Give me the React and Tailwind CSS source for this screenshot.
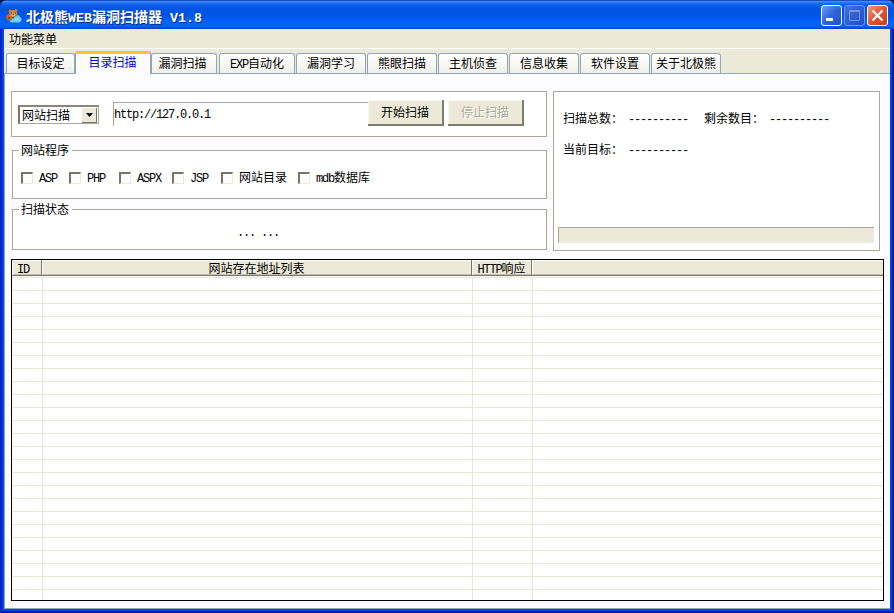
const tabs = [
  { label: '目标设定', className: 'ml-px w-[69px]' },
  { label: '目录扫描', active: true, className: 'w-[76px]' },
  { label: '漏洞扫描', className: 'w-[66px] pr-[3px]' },
  { label: 'EXP自动化', className: 'ml-[2px] w-[76px]' },
  { label: '漏洞学习', className: 'ml-px w-[70px]' },
  { label: '熊眼扫描', className: 'ml-px w-[70px]' },
  { label: '主机侦查', className: 'ml-px w-[70px]' },
  { label: '信息收集', className: 'ml-px w-[70px]' },
  { label: '软件设置', className: 'ml-px w-[70px]' },
  { label: '关于北极熊', className: 'ml-px w-[70px]' },
]

const programs = [
  { label: 'ASP', className: 'w-[48px]' },
  { label: 'PHP', className: 'w-[50px]' },
  { label: 'ASPX', className: 'w-[53px]' },
  { label: 'JSP', className: 'w-[49px]' },
  { label: '网站目录', className: 'w-[77px]' },
  { label: 'mdb数据库', className: 'w-[80px]' },
]

const columns = [
  { label: 'ID', width: 'w-[30px]', align: 'pl-[5px]' },
  { label: '网站存在地址列表', width: 'w-[430px]', align: 'justify-center' },
  { label: 'HTTP响应', width: 'w-[60px]', align: 'justify-center' },
  { label: '', width: 'flex-1', align: '' },
]

const rows = Array.from({ length: 25 }, (_, i) => i)

// Half-width characters take exactly half the width of a Chinese one
function Text({ children, title = false }) {
  const latin = title ? 'text-[13.33px]' : 'align-[0.5px] text-[12px] tracking-[-1.2px]'
  return (
    <span className="whitespace-pre">
      {children.split(/([\x20-\x7e]+)/).filter(Boolean).map((part, i) => (
        <span key={i} className={/^[\x20-\x7e]/.test(part) ? `font-['Liberation_Mono',monospace] leading-none ${latin}` : ''}>
          {part}
        </span>
      ))}
    </span>
  )
}

function BearIcon() {
  return (
    <svg width="16" height="16" viewBox="0 0 16 16" className="shrink-0">
      <path d="M4 13c0-2 2-3.500 4-2.500C8 7.500 13 6 14 9c2 1 2.300 4-.5 5.500H6c-1.500 0-2-.5-2-1.500z" fill="#6dc8f0" />
      <path d="M8 12.500c1-2 4-2 5 0" stroke="#b8ebff" fill="none" />
      <path d="M0 8l2.500-2 3 2 1 3-3 2-3-1.500z" fill="#b96a20" />
      <circle cx="4" cy="2.800" r="1.500" fill="#c47527" />
      <circle cx="10" cy="2.600" r="1.500" fill="#c47527" />
      <ellipse cx="7.200" cy="5.500" rx="4" ry="3.500" fill="#d6882f" />
      <ellipse cx="7.200" cy="7" rx="1.800" ry="1.300" fill="#eeb35c" />
      <path d="M5 5h1M9 5h1M6.700 6.500h1M2 10h2" stroke="#5b2b0b" />
    </svg>
  )
}

function CaptionButton({ kind }) {
  const colors = {
    min: 'border-white bg-linear-to-br from-[#6f9bf4] via-[#2f65dc] to-[#1c4fcb]',
    max: 'border-[#6f97ec] bg-linear-to-br from-[#3f70df] to-[#1c4fcb]',
    close: 'border-white bg-linear-to-br from-[#f0977c] via-[#e2532c] to-[#c93c14]',
  }
  return (
    <button className={`h-[21px] w-[21px] rounded-[3px] border ${colors[kind]}`}>
      <svg width="19" height="19" viewBox="0 0 19 19">
        {kind === 'min' && <path d="M4 12h7v3H4z" fill="#fff" />}
        {kind === 'max' && <path d="M4.500 4.500h10v10h-10zM4 5.500h11" fill="none" stroke="#7d93e0" />}
        {kind === 'close' && <path d="M4.500 4.500l10 10M14.500 4.500l-10 10" stroke="#fff" strokeWidth="2.200" />}
      </svg>
    </button>
  )
}

function TitleBar() {
  return (
    <header className="flex h-[29px] shrink-0 items-center bg-[linear-gradient(#0831a0_0%,#3b8cff_5%,#1262ec_14%,#0054e3_30%,#0055e7_55%,#0064fc_78%,#0062f8_90%,#0040c8_100%)] pt-[2px] pr-[6px] pl-[6px]">
      <BearIcon />
      <h1 className="ml-[4px] text-[14px] leading-[20px] font-bold text-white [text-shadow:1px_1px_#0a2a80]">
        <Text title>北极熊WEB漏洞扫描器 V1.8</Text>
      </h1>
      <div className="ml-auto flex gap-[2px]">
        <CaptionButton kind="min" />
        <CaptionButton kind="max" />
        <CaptionButton kind="close" />
      </div>
    </header>
  )
}

function Tab({ label, active, className }) {
  if (active) {
    return (
      <div className={`-mb-px flex h-[23px] items-start justify-center rounded-t-[2px] border-x border-t-3 border-x-[#91a7b4] border-t-[#ffc13c] bg-[#fcfcfe] pr-px text-[#0000e0] ${className}`}>
        <Text>{label}</Text>
      </div>
    )
  }
  return (
    <div className={`flex h-[20px] items-center justify-center rounded-t-[3px] border border-b-0 border-[#91a7b4] bg-linear-to-b from-white to-[#f0f0ea] pb-[2px] ${className}`}>
      <Text>{label}</Text>
    </div>
  )
}

function Group({ title, className = '', children }) {
  return (
    <section className={`border border-[#aca899] bg-white ${className}`}>
      {title && (
        <h2 className="-mt-[9px] ml-[6px] flex h-[17px] w-[53px] items-center bg-linear-to-b from-[#fcfcfe] from-50% to-white to-50% pb-[2px] pl-[2px]">
          <Text>{title}</Text>
        </h2>
      )}
      {children}
    </section>
  )
}

function PushButton({ label, disabled = false }) {
  return (
    <button
      disabled={disabled}
      className={`h-[26px] w-[76px] border-r-2 border-b-2 border-[#807d70] bg-[#ece9d8] pb-[1px] leading-[20px] shadow-[inset_1px_1px_#f8f7f0] ${disabled ? 'text-[#aca899] [text-shadow:1px_1px_#fff]' : ''}`}
    >
      <Text>{label}</Text>
    </button>
  )
}

function ScanTarget() {
  return (
    <Group className="flex h-[46px] w-[536px] pl-[6px]">
      <div className="mt-[13px] flex h-[19px] w-[81px] items-center border-t-2 border-l-2 border-r border-b border-t-[#8a877a] border-r-[#aca899] border-b-[#aca899] border-l-[#77746a] pl-[2px]">
        <Text>网站扫描</Text>
        <div className="mr-px ml-auto flex h-[15px] w-[15px] items-center justify-center border-r border-b border-[#77746a] bg-[#ece9d8]">
          <svg width="7" height="4" viewBox="0 0 7 4">
            <path d="M0 0h7L3.500 4z" />
          </svg>
        </div>
      </div>
      <div className="mt-[10px] ml-[14px] flex h-[24px] w-[255px] items-center border-t border-l border-[#aca899] pb-[3px]">
        <Text>http://127.0.0.1</Text>
      </div>
      <div className="mt-[8px] flex gap-[4px]">
        <PushButton label="开始扫描" />
        <PushButton label="停止扫描" disabled />
      </div>
    </Group>
  )
}

function Stat({ label, className = '' }) {
  return (
    <div className={`flex h-[18px] items-center ${className}`}>
      <span className="w-[65px]">
        <Text>{label}</Text>
      </span>
      <Text>----------</Text>
    </div>
  )
}

function ResultTable() {
  return (
    <div className="mt-[9px] flex h-[342px] w-[873px] flex-col overflow-hidden border border-black bg-white">
      <div className="flex h-[16px] shrink-0">
        {columns.map((col, i) => (
          <div
            key={i}
            className={`flex items-center border-b border-[#77746a] bg-[#ece9d8] shadow-[inset_1px_1px_#fff,inset_0_-1px_#c5c2b4] ${i < 3 ? 'border-r' : ''} ${col.width} ${col.align}`}
          >
            <Text>{col.label}</Text>
          </div>
        ))}
      </div>
      <div className="h-px shrink-0" />
      {rows.map((row) => (
        <div key={row} className="flex h-[13px] shrink-0 border-t border-[#e9e7d2] pl-px">
          {columns.map((col, i) => (
            <div key={i} className={`border-[#e9e7d2] ${i < 3 ? 'border-r' : ''} ${col.width}`} />
          ))}
        </div>
      ))}
    </div>
  )
}

export default function App() {
  return (
    <div className="h-[613px] w-[894px] bg-[#101840] font-['Noto_Sans_CJK_SC',sans-serif] text-[12px] leading-[16px] text-black">
      <div className="flex h-full flex-col overflow-hidden rounded-t-[7px] bg-[#0046e5]">
        <TitleBar />
        <div className="flex min-h-0 flex-1 border-r-2 border-b-2 border-l-2 border-r-[#001ba0] border-b-[#001ea8] border-l-[#0022c8]">
          <div className="mr-[2px] mb-[2px] ml-[2px] flex flex-1 flex-col border-b border-[#91a7b4] bg-[#ece9d8]">
            <nav className="flex h-[20px] shrink-0 items-center border-b border-white pl-[5px]">
              <Text>功能菜单</Text>
            </nav>
            <div className="flex h-[25px] shrink-0 items-end border-b border-[#91a7b4] pl-px">
              {tabs.map((tab) => (
                <Tab key={tab.label} {...tab} />
              ))}
            </div>
            <main className="flex-1 border-l border-[#91a7b4] bg-[#fcfcfe] pt-[17px] pl-[6px]">
              <div className="flex h-[159px] gap-[6px]">
                <div className="flex flex-col">
                  <ScanTarget />
                  <Group title="网站程序" className="mt-[13px] ml-px h-[49px]">
                    <div className="mt-[11px] flex pl-[8px]">
                      {programs.map((item) => (
                        <label key={item.label} className={`flex items-start ${item.className}`}>
                          <span className="mt-[2px] mr-[6px] h-[12px] w-[12px] shrink-0 border-t-2 border-r border-b border-l-2 border-t-[#77746a] border-r-[#ece9d8] border-b-[#ece9d8] border-l-[#77746a]" />
                          <span className="-mt-px">
                            <Text>{item.label}</Text>
                          </span>
                        </label>
                      ))}
                    </div>
                  </Group>
                  <Group title="扫描状态" className="mt-[10px] ml-px h-[41px]">
                    <p className="mt-[5px] pl-[224px]">
                      <Text>... ...</Text>
                    </p>
                  </Group>
                </div>
                <Group className="flex h-[160px] w-[327px] flex-col px-[4px] pt-[17px] pb-[7px]">
                  <div className="flex pl-[5px]">
                    <Stat label="扫描总数：" className="w-[141px]" />
                    <Stat label="剩余数目：" />
                  </div>
                  <Stat label="当前目标：" className="mt-[13px] pl-[5px]" />
                  <div className="mt-auto h-[16px] w-[316px] border-t border-l border-[#aca899] bg-[#ece9d8]" />
                </Group>
              </div>
              <ResultTable />
            </main>
          </div>
        </div>
      </div>
    </div>
  )
}
